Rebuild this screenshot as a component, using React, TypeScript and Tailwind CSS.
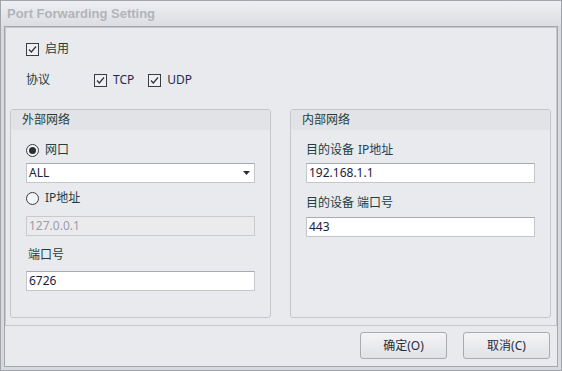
import type { ReactNode } from 'react'

function CheckBox({ label, labelClass = '' }: { label: string; labelClass?: string }) {
  return (
    <div className="flex items-center h-[20px]">
      <div className="w-[13px] h-[13px] border border-[#3a3c44] bg-[#eef0f3] flex items-center justify-center">
        <svg width="11" height="11" viewBox="0 0 11 11">
          <path d="M2 5.5 L4.3 8 L9 2.5" fill="none" stroke="#2e3038" strokeWidth="1.2" />
        </svg>
      </div>
      <span className={`ml-[6px] ${labelClass}`}>{label}</span>
    </div>
  )
}

function Radio({ label, checked }: { label: string; checked?: boolean }) {
  return (
    <div className="flex items-center h-[20px]">
      <div className="w-[13px] h-[13px] rounded-full border border-[#3a3c44] bg-[#f4f5f7] flex items-center justify-center">
        {checked && <div className="w-[7px] h-[7px] rounded-full bg-[#2b2d35]" />}
      </div>
      <span className="ml-[6px] text-[#213e3e]">{label}</span>
    </div>
  )
}

function Field({ value, disabled, className = '' }: { value: string; disabled?: boolean; className?: string }) {
  return (
    <div
      className={`w-[229px] h-[20px] border flex items-center pl-[2px] ${
        disabled
          ? 'bg-[#ebebee] border-[#c9cace] text-[#9a9caa]'
          : 'bg-white border-[#c5c6cb] border-t-[#a9abb2] text-[#1a2140]'
      } ${className}`}
    >
      {value}
    </div>
  )
}

function Group({ title, children }: { title: string; children: ReactNode }) {
  return (
    <div className="w-[261px] h-[209px] border border-[#c6c7cc] rounded-[3px] flex flex-col">
      <div className="h-[20px] bg-[#e2e3e7] pl-[11px] flex items-center text-[#213e3e]">{title}</div>
      <div className="flex flex-col pl-[15px]">{children}</div>
    </div>
  )
}

export default function App() {
  return (
    <div className="w-[562px] h-[371px] border border-[#a2a4ac] bg-[#d8d9de] flex flex-col text-[12px] leading-none font-['Noto_Sans','Noto_Sans_CJK_SC',sans-serif]">
      {/* TITLE */}
      <div className="h-[25px] bg-gradient-to-b from-[#eeeff2] to-[#dcdde2] flex items-center pl-[6px]">
        <span className="font-['Liberation_Sans',sans-serif] font-bold text-[13px] text-[#b1b4bb]">
          Port Forwarding Setting
        </span>
      </div>

      <div className="flex-1 px-[3px] pb-[3px] flex">
        <div className="flex-1 border border-[#a4a6ae] bg-[#e9eaee] flex flex-col">
          {/* MAIN PANEL */}
          <div className="h-[299px] border border-[#c6c7cc] flex flex-col">
            <div className="pl-[20px] mt-[11px]">
              <CheckBox label="启用" labelClass="text-[#213e3e]" />
            </div>
            <div className="pl-[20px] mt-[11px] flex items-center h-[20px]">
              <span className="w-[68px] text-[#213e3e]">协议</span>
              <CheckBox label="TCP" labelClass="text-[#1c2a50]" />
              <div className="w-[14px]" />
              <CheckBox label="UDP" labelClass="text-[#1c2a50]" />
            </div>

            <div className="mt-[19px] pl-[4px] flex gap-[19px]">
              <Group title="外部网络">
                <div className="mt-[10px]">
                  <Radio label="网口" checked />
                </div>
                <div className="mt-[3px] w-[229px] h-[20px] bg-white border border-[#c5c6cb] border-t-[#a9abb2] flex items-center justify-between pl-[2px] pr-[4px] text-[#1a2140]">
                  <span>ALL</span>
                  <svg width="7" height="4" viewBox="0 0 7 4">
                    <path d="M0 0 H7 L3.5 4 Z" fill="#2a2b3e" />
                  </svg>
                </div>
                <div className="mt-[5px]">
                  <Radio label="IP地址" />
                </div>
                <Field value="127.0.0.1" disabled className="mt-[8px]" />
                <div className="mt-[9px] h-[20px] flex items-center pl-[2px] text-[#213e3e]">端口号</div>
                <Field value="6726" className="mt-[6px]" />
              </Group>

              <Group title="内部网络">
                <div className="mt-[10px] h-[20px] flex items-center text-[#213e3e]">
                  目的设备 <span className="ml-[4px] text-[#27405a]">IP地址</span>
                </div>
                <Field value="192.168.1.1" className="mt-[3px]" />
                <div className="mt-[10px] h-[20px] flex items-center text-[#213e3e]">目的设备 端口号</div>
                <Field value="443" className="mt-[4px]" />
              </Group>
            </div>
          </div>

          {/* BUTTONS */}
          <div className="flex-1 flex justify-end items-start pt-[6px] pr-[7px] gap-[16px]">
            <button className="w-[87px] h-[27px] border border-[#a9abb1] rounded-[3px] bg-gradient-to-b from-[#f4f4f6] to-[#e1e2e6] text-[#1f2d40]">
              确定(O)
            </button>
            <button className="w-[87px] h-[27px] border border-[#a9abb1] rounded-[3px] bg-gradient-to-b from-[#f4f4f6] to-[#e1e2e6] text-[#1f2d40]">
              取消(C)
            </button>
          </div>
        </div>
      </div>
    </div>
  )
}
